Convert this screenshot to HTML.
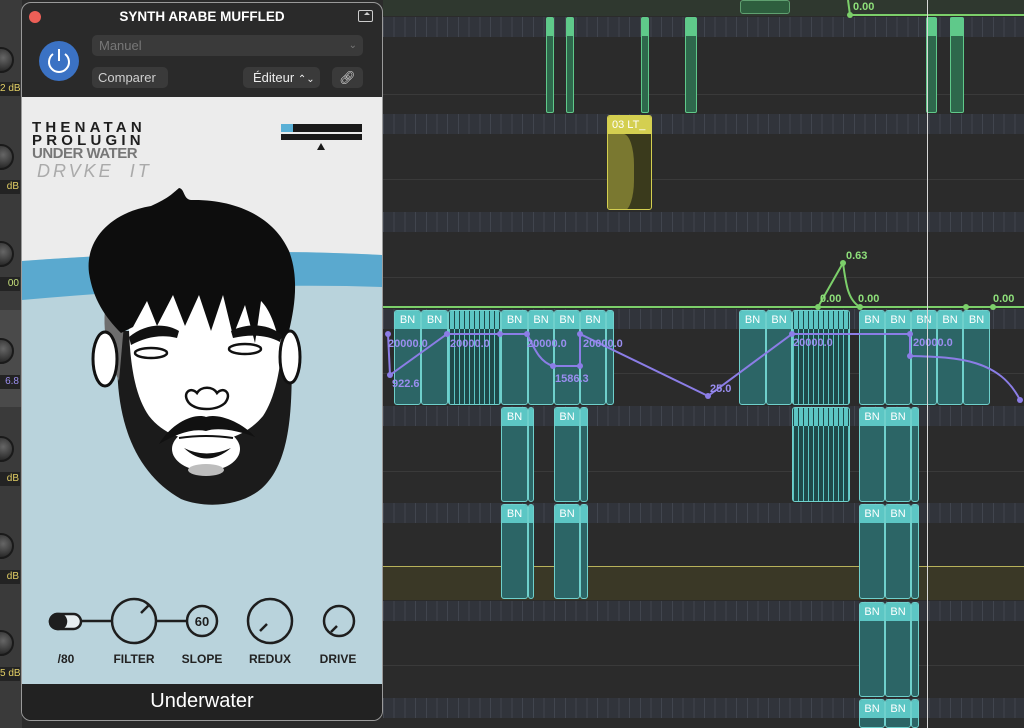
<!DOCTYPE html>
<html><head><meta charset="utf-8"><style>
*{margin:0;padding:0;box-sizing:border-box}
html{width:1024px;height:728px;overflow:hidden}
body{width:1024px;height:728px;overflow:hidden;background:#2b2b2b;position:relative;font-family:"Liberation Sans",sans-serif}
.a{position:absolute}
.strip{position:absolute;left:383px;width:641px;height:20px;background:#31343b repeating-linear-gradient(90deg,#41454e 0 1px,transparent 1px 10.7px)}
.mid{position:absolute;left:383px;width:641px;height:1px;background:#3a3a3a}
.g{position:absolute;background:#2e684c;border:1px solid #5fc98a;border-radius:2px}
.g::before{content:"";position:absolute;left:0;right:0;top:0;height:18px;background:#5fc98a}
.bn{position:absolute;background:#2c6566;border:1px solid #6fd0cc;border-radius:3px;overflow:hidden}
.bn span{display:block;height:18px;background:#5cc6c4;color:#fff;font-size:11px;text-align:center;line-height:18px}
.lab{position:absolute;left:0;width:20px;height:14px;background:#232323;font-size:10px;line-height:14px;color:#e3cf64;text-align:right;padding-right:1px;overflow:hidden;white-space:nowrap}
.kn{position:absolute;left:-12px;width:26px;height:26px;border-radius:50%;background:radial-gradient(circle at 60% 40%,#666,#2a2a2a 70%);border:2px solid #1a1a1a}
.btn{position:absolute;background:#3a3a3a;border-radius:5px;color:#cfcfcf;font-size:13px;line-height:21px}
.cl{position:absolute;font-size:12px;font-weight:bold;color:#222;width:70px;text-align:center}
</style></head><body>
<div class="a" style="left:0;top:0;width:22px;height:728px;background:#3a3a3a"></div>
<div class="a" style="left:0;top:310px;width:22px;height:97px;background:#4a4a4a"></div>
<div class="kn" style="top:47px"></div><div class="lab" style="top:82px">2 dB</div>
<div class="kn" style="top:144px"></div><div class="lab" style="top:180px">dB</div>
<div class="kn" style="top:241px"></div><div class="lab" style="top:277px;color:#c6e07a">00</div>
<div class="kn" style="top:338px"></div><div class="lab" style="top:375px;color:#9b8ef0">6.8</div>
<div class="kn" style="top:436px"></div><div class="lab" style="top:472px">dB</div>
<div class="kn" style="top:533px"></div><div class="lab" style="top:570px">dB</div>
<div class="kn" style="top:630px"></div><div class="lab" style="top:667px">5 dB</div>

<div class="a" style="left:383px;top:0;width:641px;height:16px;background:#2f382f"></div>
<div class="a" style="left:740px;top:0;width:50px;height:14px;background:#2e5e3e;border:1px solid #5fa070;border-radius:3px"></div>
<div class="strip" style="top:17px"></div><div class="mid" style="top:94px"></div>
<div class="strip" style="top:114px"></div><div class="mid" style="top:179px"></div>
<div class="strip" style="top:212px"></div><div class="mid" style="top:277px"></div>
<div class="strip" style="top:309px"></div><div class="mid" style="top:373px"></div>
<div class="strip" style="top:406px"></div><div class="mid" style="top:471px"></div>
<div class="strip" style="top:503px"></div>
<div class="a" style="left:383px;top:566px;width:641px;height:34px;background:#3a3826;border-top:1px solid #b8b25a"></div>
<div class="strip" style="top:601px"></div><div class="mid" style="top:665px"></div>
<div class="strip" style="top:698px"></div>

<div class="g" style="left:546px;top:17px;width:8px;height:96px"></div>
<div class="g" style="left:566px;top:17px;width:8px;height:96px"></div>
<div class="g" style="left:641px;top:17px;width:8px;height:96px"></div>
<div class="g" style="left:685px;top:17px;width:12px;height:96px"></div>
<div class="g" style="left:926px;top:17px;width:11px;height:96px"></div>
<div class="g" style="left:950px;top:17px;width:14px;height:96px"></div>

<div class="a" style="left:607px;top:115px;width:45px;height:95px;background:#3a3a1c;border:1px solid #d4cf50;border-radius:3px;overflow:hidden">
<div style="height:18px;background:#d4cf50;color:#fff;font-size:11px;line-height:18px;padding-left:4px">03 LT_</div>
<div style="position:absolute;left:0;top:18px;width:26px;height:77px;background:#7a7830;border-radius:0 40% 40% 0"></div>
</div>

<div class="bn" style="left:394px;top:310px;width:27px;height:95px"><span>BN</span></div>
<div class="bn" style="left:421px;top:310px;width:27px;height:95px"><span>BN</span></div>
<div class="bn" style="left:448px;top:310px;width:53px;height:95px;background:#1e4a4a repeating-linear-gradient(90deg,#5cc6c4 0 1px,transparent 1px 5px)"><span style="background:#5cc6c4 repeating-linear-gradient(90deg,#1e4a4a 0 1px,transparent 1px 5px)"></span></div>
<div class="bn" style="left:501px;top:310px;width:27px;height:95px"><span>BN</span></div>
<div class="bn" style="left:528px;top:310px;width:26px;height:95px"><span>BN</span></div>
<div class="bn" style="left:554px;top:310px;width:26px;height:95px"><span>BN</span></div>
<div class="bn" style="left:580px;top:310px;width:26px;height:95px"><span>BN</span></div>
<div class="bn" style="left:606px;top:310px;width:8px;height:95px"><span></span></div>
<div class="bn" style="left:739px;top:310px;width:27px;height:95px"><span>BN</span></div>
<div class="bn" style="left:766px;top:310px;width:26px;height:95px"><span>BN</span></div>
<div class="bn" style="left:792px;top:310px;width:58px;height:95px;background:#1e4a4a repeating-linear-gradient(90deg,#5cc6c4 0 1px,transparent 1px 5px)"><span style="background:#5cc6c4 repeating-linear-gradient(90deg,#1e4a4a 0 1px,transparent 1px 5px)"></span></div>
<div class="bn" style="left:859px;top:310px;width:26px;height:95px"><span>BN</span></div>
<div class="bn" style="left:885px;top:310px;width:26px;height:95px"><span>BN</span></div>
<div class="bn" style="left:911px;top:310px;width:26px;height:95px"><span>BN</span></div>
<div class="bn" style="left:937px;top:310px;width:26px;height:95px"><span>BN</span></div>
<div class="bn" style="left:963px;top:310px;width:27px;height:95px"><span>BN</span></div>
<div class="bn" style="left:501px;top:407px;width:27px;height:95px"><span>BN</span></div>
<div class="bn" style="left:528px;top:407px;width:6px;height:95px"><span></span></div>
<div class="bn" style="left:554px;top:407px;width:26px;height:95px"><span>BN</span></div>
<div class="bn" style="left:580px;top:407px;width:8px;height:95px"><span></span></div>
<div class="bn" style="left:792px;top:407px;width:58px;height:95px;background:#1e4a4a repeating-linear-gradient(90deg,#5cc6c4 0 1px,transparent 1px 5px)"><span style="background:#5cc6c4 repeating-linear-gradient(90deg,#1e4a4a 0 1px,transparent 1px 5px)"></span></div>
<div class="bn" style="left:859px;top:407px;width:26px;height:95px"><span>BN</span></div>
<div class="bn" style="left:885px;top:407px;width:26px;height:95px"><span>BN</span></div>
<div class="bn" style="left:911px;top:407px;width:8px;height:95px"><span></span></div>
<div class="bn" style="left:501px;top:504px;width:27px;height:95px"><span>BN</span></div>
<div class="bn" style="left:528px;top:504px;width:6px;height:95px"><span></span></div>
<div class="bn" style="left:554px;top:504px;width:26px;height:95px"><span>BN</span></div>
<div class="bn" style="left:580px;top:504px;width:8px;height:95px"><span></span></div>
<div class="bn" style="left:859px;top:504px;width:26px;height:95px"><span>BN</span></div>
<div class="bn" style="left:885px;top:504px;width:26px;height:95px"><span>BN</span></div>
<div class="bn" style="left:911px;top:504px;width:8px;height:95px"><span></span></div>
<div class="bn" style="left:859px;top:602px;width:26px;height:95px"><span>BN</span></div>
<div class="bn" style="left:885px;top:602px;width:26px;height:95px"><span>BN</span></div>
<div class="bn" style="left:911px;top:602px;width:8px;height:95px"><span></span></div>
<div class="bn" style="left:859px;top:699px;width:26px;height:29px"><span>BN</span></div>
<div class="bn" style="left:885px;top:699px;width:26px;height:29px"><span>BN</span></div>
<div class="bn" style="left:911px;top:699px;width:8px;height:29px"><span></span></div>

<svg class="a" style="left:0;top:0" width="1024" height="728">
<g stroke="#7ccf6a" stroke-width="2" fill="none">
<line x1="850" y1="15" x2="1024" y2="15"/>
<path d="M850 15 L848 0"/>
<line x1="383" y1="307" x2="1024" y2="307"/>
<path d="M818 307 L843 263 C846 285 848 300 860 307"/>
</g>
<g fill="#7ccf6a"><circle cx="850" cy="15" r="3"/><circle cx="818" cy="307" r="3"/><circle cx="843" cy="263" r="3"/><circle cx="860" cy="307" r="3"/><circle cx="966" cy="307" r="3"/><circle cx="993" cy="307" r="3"/></g>
<g fill="#8ee07a" font-size="11" font-weight="bold" font-family="Liberation Sans">
<text x="853" y="10">0.00</text><text x="846" y="259">0.63</text><text x="820" y="302">0.00</text><text x="858" y="302">0.00</text><text x="993" y="302">0.00</text></g>
<g stroke="#8b7de6" stroke-width="2" fill="none">
<path d="M388 334 L390 375 L447 334 L500 334 L527 334 C535 350 540 362 553 366 L580 366 L580 334 L708 396 L792 334 L910 334 L910 356 C960 357 1000 360 1020 400"/>
</g>
<g fill="#8b7de6"><circle cx="388" cy="334" r="3"/><circle cx="390" cy="375" r="3"/><circle cx="447" cy="334" r="3"/><circle cx="500" cy="334" r="3"/><circle cx="527" cy="334" r="3"/><circle cx="553" cy="366" r="3"/><circle cx="580" cy="366" r="3"/><circle cx="580" cy="334" r="3"/><circle cx="708" cy="396" r="3"/><circle cx="792" cy="334" r="3"/><circle cx="910" cy="334" r="3"/><circle cx="910" cy="356" r="3"/><circle cx="1020" cy="400" r="3"/></g>
<g fill="#9a8ef0" font-size="11" font-weight="bold" font-family="Liberation Sans">
<text x="388" y="347">20000.0</text><text x="392" y="387">922.6</text><text x="450" y="347">20000.0</text><text x="527" y="347">20000.0</text><text x="583" y="347">20000.0</text><text x="555" y="382">1586.3</text><text x="710" y="392">25.0</text><text x="793" y="346">20000.0</text><text x="913" y="346">20000.0</text></g>
<line x1="927.5" y1="0" x2="927.5" y2="728" stroke="#d8d8d8" stroke-width="1"/>
</svg>

<div class="a" style="left:21px;top:2px;width:362px;height:719px;border-radius:10px;background:#2a2a2a;border:1px solid #9a9a9a;overflow:hidden">
<div class="a" style="left:7px;top:8px;width:12px;height:12px;border-radius:50%;background:#ec5f57"></div>
<div class="a" style="left:0;top:6px;width:360px;text-align:center;color:#fff;font-weight:bold;font-size:13.5px">SYNTH ARABE MUFFLED</div>
<div class="a" style="left:336px;top:7px;width:15px;height:12px;border:1.5px solid #ccc;border-radius:2px"><div style="position:absolute;left:5px;top:1px;width:0;height:0;border:3px solid transparent;border-bottom:3px solid #ccc;border-top:0"></div></div>
<div class="a" style="left:17px;top:38px;width:40px;height:40px;border-radius:50%;background:#3b72c4">
<svg width="40" height="40"><path d="M14 13 A10 10 0 1 0 26 13" stroke="#fff" stroke-width="2" fill="none"/><line x1="20" y1="8" x2="20" y2="20" stroke="#fff" stroke-width="2"/></svg></div>
<div class="btn" style="left:70px;top:32px;width:271px;height:21px;color:#777;padding-left:7px">Manuel<span style="position:absolute;right:6px;font-size:10px">⌄</span></div>
<div class="btn" style="left:70px;top:64px;width:76px;height:21px;padding-left:6px">Comparer</div>
<div class="btn" style="left:221px;top:64px;width:77px;height:21px;padding-left:10px;color:#eee">Éditeur <span style="font-size:10px">⌃⌄</span></div>
<div class="btn" style="left:310px;top:64px;width:31px;height:21px;text-align:center;color:#ddd">🔗︎</div>

<div class="a" style="left:0;top:94px;width:360px;height:589px;background:#b9d3dc"></div>
<svg class="a" style="left:0;top:94px" width="360" height="589">
<path d="M0 0 H360 V158 C250 152 120 155 0 164 Z" fill="#ececec"/>
<path d="M0 164 C120 155 250 152 360 158 V190 C250 186 120 192 0 203 Z" fill="#5aa9cf"/>
</svg>
<div class="a" style="left:10px;top:118px;font-weight:bold;font-size:15px;letter-spacing:4.2px;color:#1e1e1e;line-height:13px">THENATAN<br>PROLUGIN</div>
<div class="a" style="left:10px;top:144px;font-weight:bold;font-size:15px;color:#777;line-height:14px;letter-spacing:-.5px">UNDER WATER</div>
<div class="a" style="left:15px;top:158px;font-style:italic;font-size:18px;color:#aaa;letter-spacing:3px;line-height:20px">DRVKE&nbsp;&nbsp;IT</div>
<div class="a" style="left:259px;top:121px;width:81px;height:8px;background:#1a1a1a"><div style="width:12px;height:8px;background:#5ab0d6"></div></div>
<div class="a" style="left:259px;top:131px;width:81px;height:6px;background:#1a1a1a"></div>
<div class="a" style="left:295px;top:140px;width:0;height:0;border:4px solid transparent;border-bottom:7px solid #1a1a1a;border-top:0"></div>

<svg class="a" style="left:-21px;top:-2px" width="400" height="520">
<path d="M118 330 C110 410 130 470 180 498 C205 508 240 505 260 488 C292 460 292 400 290 330 Z" fill="#1b1b1b"/>
<path d="M105 300 C100 330 108 360 118 380 L125 300 Z" fill="#6e6e6e"/>
<path d="M128 290 L282 290 C284 360 275 395 262 415 C245 435 225 440 205 440 C183 440 162 433 148 415 C134 395 126 360 128 290 Z" fill="#fff"/>
<ellipse cx="205" cy="448" rx="34" ry="22" fill="#fff"/>
<ellipse cx="205" cy="469" rx="18" ry="6" fill="#bdbdbd"/>
<ellipse cx="104" cy="358" rx="12" ry="27" fill="#fff" stroke="#111" stroke-width="3"/>
<ellipse cx="289" cy="356" rx="10" ry="26" fill="#fff" stroke="#111" stroke-width="3"/>
<path d="M88 272 C84 240 108 212 150 205 C168 197 172 192 178 187 C184 188 182 198 190 199 C232 198 272 214 288 250 C298 276 294 305 288 330 L278 340 C272 316 266 306 260 300 L254 342 L244 304 L232 335 L222 294 L210 330 L198 294 L184 325 L172 294 L156 325 L146 300 L132 326 L120 332 C104 316 92 298 88 272 Z" fill="#0d0d0d"/>
<path d="M128 336 C145 322 165 322 178 330 L176 337 C160 333 145 336 130 344 Z" fill="#111"/>
<path d="M230 330 C246 322 266 322 281 334 L279 341 C266 334 250 333 232 337 Z" fill="#111"/>
<ellipse cx="150" cy="352" rx="16" ry="5" fill="#fff" stroke="#111" stroke-width="2.5"/>
<ellipse cx="244" cy="348" rx="16" ry="5" fill="#fff" stroke="#111" stroke-width="2.5"/>
<path d="M188 402 C180 392 190 385 196 392 C200 385 212 385 216 392 C222 385 232 392 224 402 C215 410 196 410 188 402" fill="none" stroke="#111" stroke-width="2.5"/>
<path d="M158 443 C172 420 195 412 205 416 C216 412 240 420 254 436 C236 429 216 426 205 430 C190 427 174 434 158 443 Z" fill="#111"/>
<path d="M178 437 Q205 433 232 437" stroke="#111" stroke-width="2" fill="none"/>
<path d="M183 447 Q205 468 230 447 Q205 458 183 447 Z" fill="#111"/>
</svg>

<svg class="a" style="left:-21px;top:-2px" width="400" height="700" fill="none" stroke="#1e1e1e" stroke-width="2.5">
<rect x="49" y="613" width="31" height="15" rx="7.5" fill="#e7eef0"/>
<rect x="49" y="613" width="16" height="15" rx="7.5" fill="#1e1e1e"/>
<line x1="80" y1="620" x2="111" y2="620"/>
<circle cx="133" cy="620" r="22"/>
<line x1="140" y1="612" x2="148" y2="604"/>
<line x1="155" y1="620" x2="186" y2="620"/>
<circle cx="201" cy="620" r="15"/>
<circle cx="269" cy="620" r="22"/>
<line x1="259" y1="630" x2="266" y2="623"/>
<circle cx="338" cy="620" r="15"/>
<line x1="330" y1="631" x2="336" y2="625"/>
<text x="201" y="625" font-size="13" font-weight="bold" fill="#1e1e1e" stroke="none" text-anchor="middle" font-family="Liberation Sans">60</text>
</svg>
<div class="cl" style="left:9px;top:649px">/80</div>
<div class="cl" style="left:77px;top:649px">FILTER</div>
<div class="cl" style="left:145px;top:649px">SLOPE</div>
<div class="cl" style="left:213px;top:649px">REDUX</div>
<div class="cl" style="left:281px;top:649px">DRIVE</div>

<div class="a" style="left:0;top:681px;width:360px;height:38px;background:#222;color:#fff;font-size:20px;text-align:center;line-height:34px">Underwater</div>
</div>
</body></html>
